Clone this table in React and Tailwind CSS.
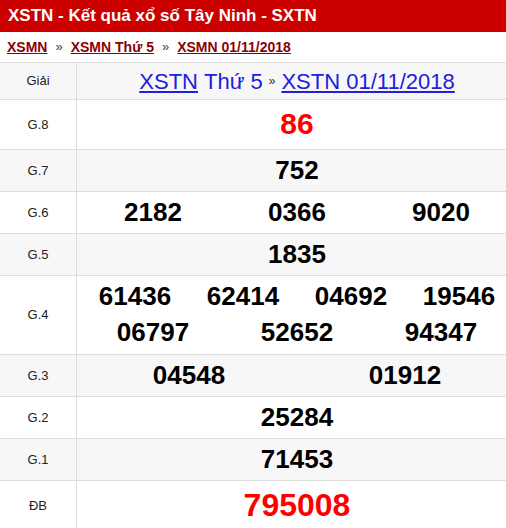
import React from "react";

const rows = [
  { label: "G.8", h: "h-[50px]", bg: "bg-white", lines: [["86"]], red: "text-[30px]" },
  { label: "G.7", h: "h-[42px]", bg: "bg-[#f7f7f7]", lines: [["752"]] },
  { label: "G.6", h: "h-[42px]", bg: "bg-white", lines: [["2182", "0366", "9020"]] },
  { label: "G.5", h: "h-[42px]", bg: "bg-[#f7f7f7]", lines: [["1835"]] },
  {
    label: "G.4",
    h: "h-[79px]",
    bg: "bg-white",
    lines: [
      ["61436", "62414", "04692", "19546"],
      ["06797", "52652", "94347"],
    ],
  },
  { label: "G.3", h: "h-[42px]", bg: "bg-[#f7f7f7]", lines: [["04548", "01912"]] },
  { label: "G.2", h: "h-[42px]", bg: "bg-white", lines: [["25284"]] },
  { label: "G.1", h: "h-[42px]", bg: "bg-[#f7f7f7]", lines: [["71453"]] },
  { label: "ĐB", h: "h-[50px]", bg: "bg-white", lines: [["795008"]], red: "text-[32px]" },
];

function Row({ r }) {
  return (
    <div className={`flex ${r.h} ${r.bg} border-b border-[#dddddd]`}>
      <div className="w-[77px] shrink-0 border-r border-[#dddddd] flex items-center justify-center text-[13px] text-[#222]">
        {r.label}
      </div>
      <div className="flex-1 px-1 pb-[2px] flex flex-col justify-center">
        {r.lines.map((line, i) => (
          <div key={i} className="flex leading-[36px]">
            {line.map((n, j) => (
              <div
                key={j}
                className={`flex-1 text-center font-bold ${
                  r.red ? `${r.red} text-[#ff0000]` : "text-[26px] text-black"
                }`}
              >
                {n}
              </div>
            ))}
          </div>
        ))}
      </div>
    </div>
  );
}

export default function App() {
  return (
    <div
      className="w-[506px] h-[528px] overflow-hidden bg-white"
      style={{ fontFamily: '"Liberation Sans", Arial, sans-serif' }}
    >
      <div className="h-[32px] bg-[#cc0000] flex items-center pl-2 text-white font-bold text-[17px]">
        XSTN - Kết quả xổ số Tây Ninh - SXTN
      </div>
      <div className="h-[31px] flex items-center pl-[7px] text-[14px] font-bold text-[#8b0000] border-b border-[#dddddd]">
        <a className="underline">XSMN</a>
        <span className="px-[8px] font-normal text-[13px] text-[#663333]">»</span>
        <a className="underline">XSMN Thứ 5</a>
        <span className="px-[8px] font-normal text-[13px] text-[#663333]">»</span>
        <a className="underline">XSMN 01/11/2018</a>
      </div>
      <div className="w-[517px]">
        <div className="flex h-[37px] bg-[#f7f7f7] border-b border-[#dddddd]">
          <div className="w-[77px] shrink-0 border-r border-[#dddddd] flex items-center justify-center text-[13px] text-[#222]">
            Giải
          </div>
          <div className="flex-1 px-1 flex items-center justify-center text-[22px] text-[#2020dd]">
            <a className="underline">XSTN</a>
            <span className="ml-[6px]">Thứ 5</span>
            <span className="mx-[6px] text-[12px] text-[#333]">»</span>
            <a className="underline">XSTN 01/11/2018</a>
          </div>
        </div>
        {rows.map((r) => (
          <Row key={r.label} r={r} />
        ))}
      </div>
    </div>
  );
}
